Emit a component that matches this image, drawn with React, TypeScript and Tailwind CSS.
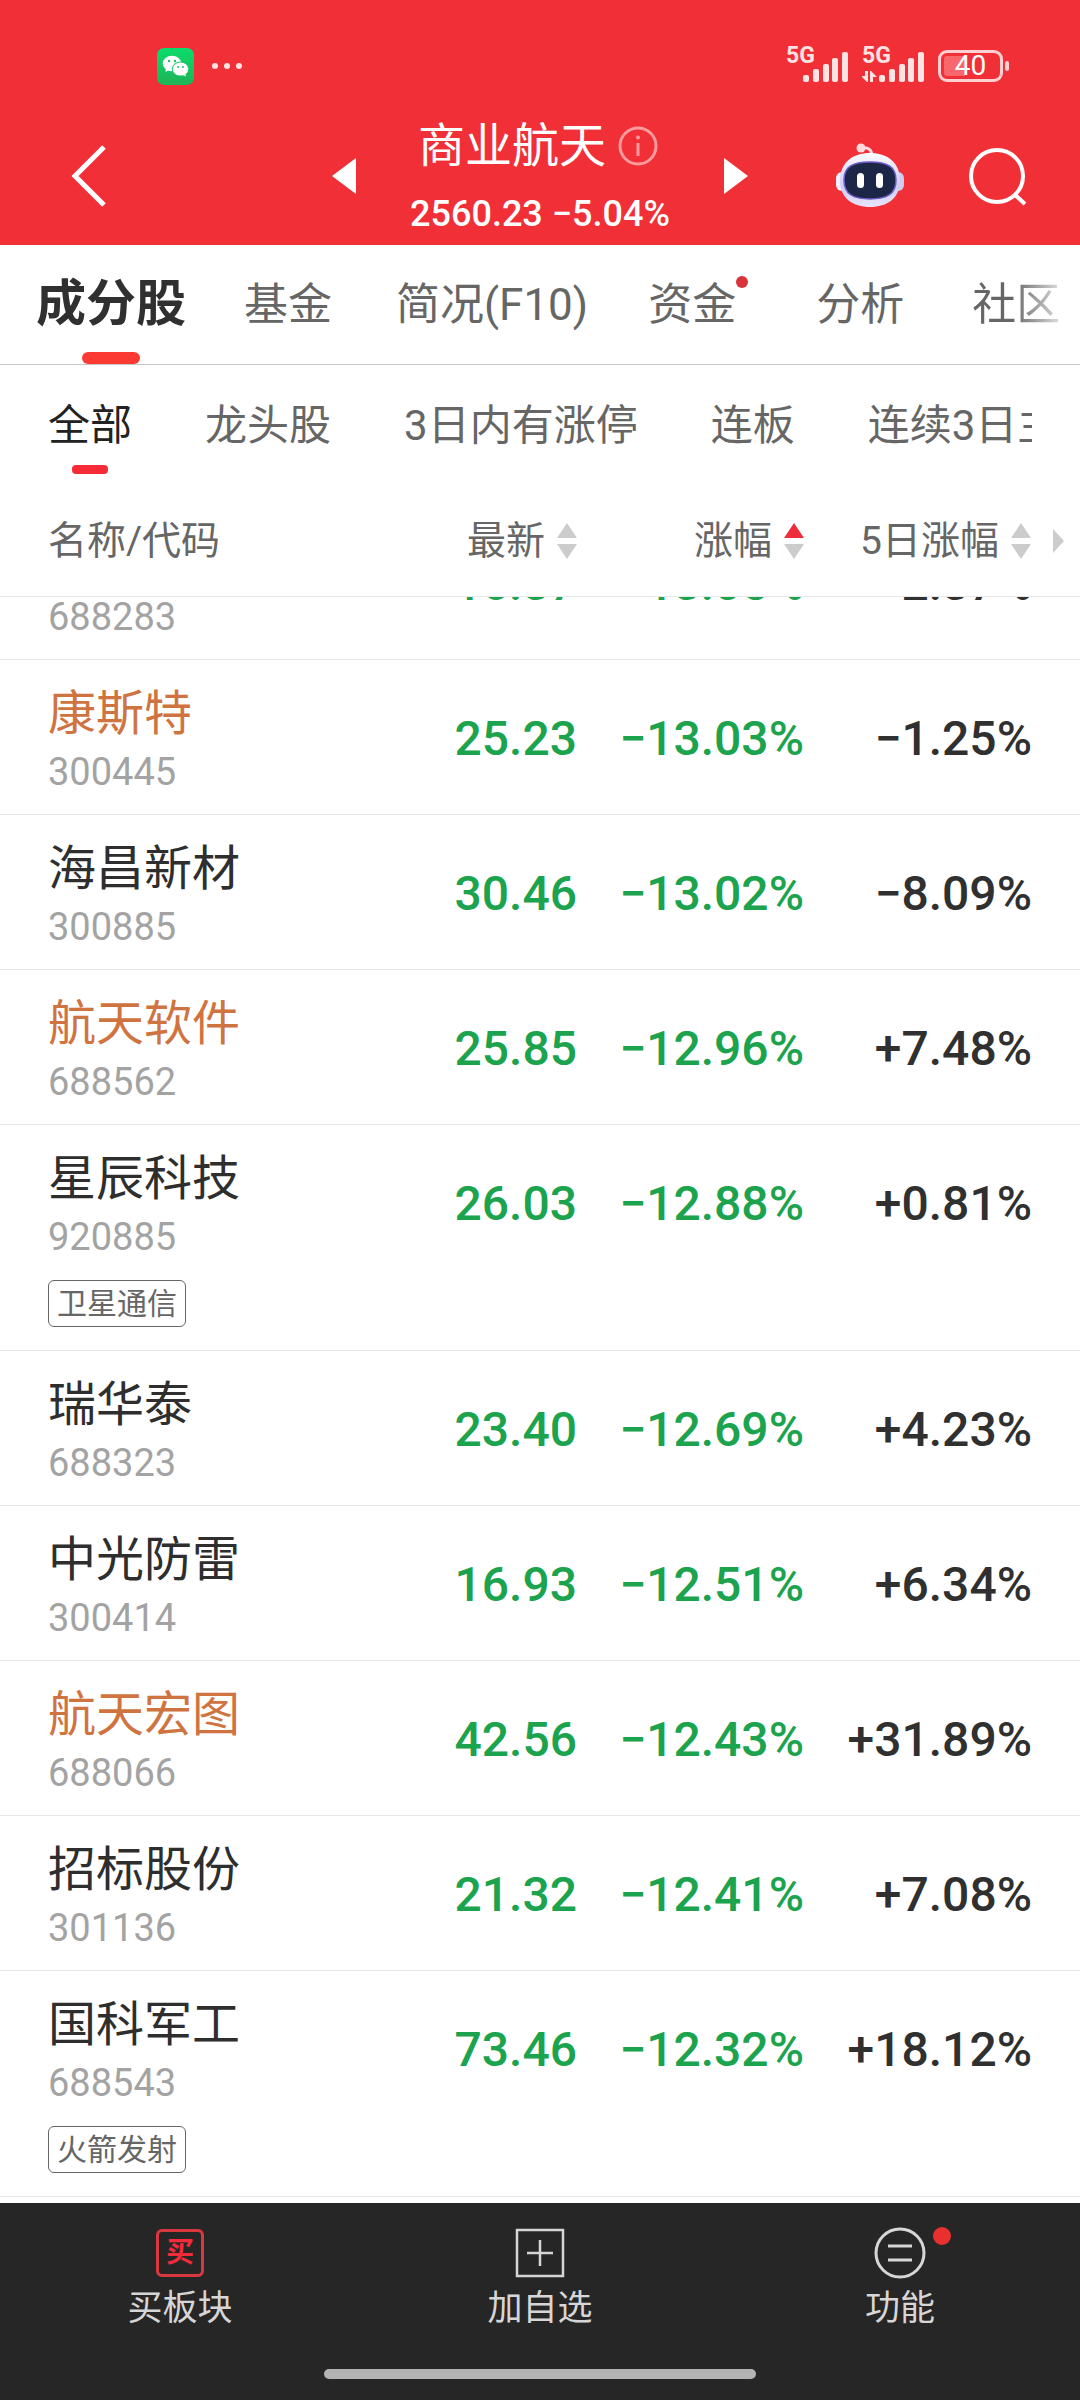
import type { ReactNode } from 'react'

type Stock = {
  name?: string
  code: string
  price: string
  change: string
  fiveDay: string
  hot?: boolean
  tag?: string
}

// first row is scrolled half way under the table head, its name is out of view
const stocks: Stock[] = [
  { code: '688283', price: '16.37', change: '−13.05%', fiveDay: '−2.37%' },
  { name: '康斯特', code: '300445', price: '25.23', change: '−13.03%', fiveDay: '−1.25%', hot: true },
  { name: '海昌新材', code: '300885', price: '30.46', change: '−13.02%', fiveDay: '−8.09%' },
  { name: '航天软件', code: '688562', price: '25.85', change: '−12.96%', fiveDay: '+7.48%', hot: true },
  { name: '星辰科技', code: '920885', price: '26.03', change: '−12.88%', fiveDay: '+0.81%', tag: '卫星通信' },
  { name: '瑞华泰', code: '688323', price: '23.40', change: '−12.69%', fiveDay: '+4.23%' },
  { name: '中光防雷', code: '300414', price: '16.93', change: '−12.51%', fiveDay: '+6.34%' },
  { name: '航天宏图', code: '688066', price: '42.56', change: '−12.43%', fiveDay: '+31.89%', hot: true },
  { name: '招标股份', code: '301136', price: '21.32', change: '−12.41%', fiveDay: '+7.08%' },
  { name: '国科军工', code: '688543', price: '73.46', change: '−12.32%', fiveDay: '+18.12%', tag: '火箭发射' },
]

const filters = ['龙头股', '3日内有涨停', '连板', '连续3日主']

function WechatIcon() {
  return (
    <svg className="w-[37px] h-[37px]" viewBox="0 0 37 37">
      <defs>
        <linearGradient id="wechat" x1="0" y1="0" x2="0" y2="1">
          <stop offset="0" stopColor="#0bdc6c" />
          <stop offset="1" stopColor="#1fb257" />
        </linearGradient>
      </defs>
      <rect width="37" height="37" rx="7" fill="url(#wechat)" />
      <path d="M9 19l-0.500 5 5-3z" fill="#fff" />
      <ellipse cx="15" cy="15.500" rx="9.300" ry="7.800" fill="#fff" />
      <ellipse cx="23.500" cy="21" rx="8.700" ry="7.500" fill="#14c660" />
      <ellipse cx="23.500" cy="21" rx="7.800" ry="6.600" fill="#fff" />
      <path d="M25 26.500l3.800 2-0.500-4z" fill="#fff" />
      <circle cx="12" cy="13" r="1.200" fill="#14c660" />
      <circle cx="18" cy="13" r="1.200" fill="#14c660" />
      <circle cx="21" cy="19" r="1" fill="#14c660" />
      <circle cx="26" cy="19" r="1" fill="#14c660" />
    </svg>
  )
}

function Signal({ active }: { active?: boolean }) {
  return (
    <div className="relative w-[63px] h-9 text-[#ffe3e3]">
      <span className="absolute left-0 -top-1 text-[23px] leading-6 font-bold">5G</span>
      <svg className="w-full h-full" viewBox="0 0 63 36" fill="currentColor">
        {active && <path d="M3 23h3v11h-1l-6-6h4zM8 34v-11h1l6 6h-4v5z" />}
        <rect x="17" y="27" width="6" height="7" rx="2" />
        <rect x="27" y="21" width="6" height="13" rx="2" />
        <rect x="37" y="16" width="6" height="18" rx="2" />
        <rect x="46" y="10" width="6" height="24" rx="2" />
        <rect x="56" y="4" width="6" height="30" rx="2" />
      </svg>
    </div>
  )
}

function RobotIcon() {
  return (
    <svg className="w-[70px] h-[66px]" viewBox="0 0 70 66">
      <defs>
        <linearGradient id="shell" x1="0" y1="0" x2="0" y2="1">
          <stop offset="0" stopColor="#fdfcff" />
          <stop offset="0.6" stopColor="#cdccf2" />
          <stop offset="1" stopColor="#e8e4fb" />
        </linearGradient>
      </defs>
      <path d="M26 5c7-1 11 1 11 9" fill="none" stroke="#ffdce6" strokeWidth="3" />
      <circle cx="26" cy="5" r="4.500" fill="#ffd9de" />
      <rect x="1" y="29" width="12" height="19" rx="6" fill="#f1effd" />
      <rect x="57" y="29" width="12" height="19" rx="6" fill="#cfc9f3" />
      <path d="M35 10c17 0 30 9 30 28 0 17-13 26-30 26S5 55 5 38c0-19 13-28 30-28z" fill="url(#shell)" />
      <path d="M35 19c18 0 26 5 26 18 0 14-9 19-26 19S9 51 9 37c0-13 8-18 26-18z" fill="#1c2748" stroke="#6a5cc9" strokeWidth="1.500" />
      <rect x="22" y="30" width="7" height="15" rx="3.500" fill="#fff" />
      <rect x="41" y="30" width="7" height="15" rx="3.500" fill="#fff" />
    </svg>
  )
}

function SortIcon({ up }: { up?: boolean }) {
  return (
    <svg className="w-5 h-9 shrink-0" viewBox="0 0 20 36">
      <path d="M10 0l10 15H0z" fill={up ? '#ee2e3a' : '#cccccc'} />
      <path d="M10 36L0 21h20z" fill="#cccccc" />
    </svg>
  )
}

function SortHeader({ label, up, children }: { label: string; up?: boolean; children?: ReactNode }) {
  return (
    <div className="flex items-center justify-end">
      <button className="flex items-center gap-3 leading-12 whitespace-nowrap">
        {label}
        <SortIcon up={up} />
      </button>
      {children}
    </div>
  )
}

function StockRow({ stock }: { stock: Stock }) {
  const cell = 'border-b border-[#e8e8e8] align-top'
  const box = stock.name ? '' : 'h-[62px] overflow-hidden flex flex-col justify-end'
  const value = 'h-[154px] shrink-0 flex items-center justify-end text-[48px] leading-none font-medium pt-1'

  return (
    <tr>
      <td className={cell + ' pl-12'}>
        {stock.name ? (
          <div className="pt-[26px] min-h-[154px]">
            <div className={'text-[48px] leading-14 whitespace-nowrap ' + (stock.hot ? 'text-[#cf7440]' : 'text-[#2e2e2e]')}>
              {stock.name}
            </div>
            <div className="mt-[10px] text-[38px] leading-10 text-[#a3a3a3]">{stock.code}</div>
            {stock.tag && (
              <div className="mt-[23px] mb-[23px] w-fit h-[47px] px-2 flex items-center rounded-md border border-[#666] text-[30px] leading-8 text-[#666]">
                {stock.tag}
              </div>
            )}
          </div>
        ) : (
          <div className="text-[38px] leading-10 text-[#a3a3a3]">{stock.code}</div>
        )}
      </td>
      <td className={cell}>
        <div className={box}>
          <div className={value + ' text-[#1ba34e]'}>{stock.price}</div>
        </div>
      </td>
      <td className={cell}>
        <div className={box}>
          <div className={value + ' text-[#1ba34e]'}>{stock.change}</div>
        </div>
      </td>
      <td className={cell + ' pr-12'}>
        <div className={box}>
          <div className={value + ' text-[#303030]'}>{stock.fiveDay}</div>
        </div>
      </td>
    </tr>
  )
}

export default function App() {
  return (
    <div className="min-h-screen flex flex-col bg-white overflow-hidden font-[Roboto,'Noto_Sans_CJK_SC',sans-serif]">
      <header className="bg-[#f12f37] text-white pb-[11px]">
        <div className="flex items-center justify-between pt-12 pl-[157px] pr-[71px] h-21">
          <div className="flex items-center gap-[18px]">
            <WechatIcon />
            <div className="flex gap-[6px]">
              <span className="size-[6px] rounded-full bg-[#ffe3e3]"></span>
              <span className="size-[6px] rounded-full bg-[#ffe3e3]"></span>
              <span className="size-[6px] rounded-full bg-[#ffe3e3]"></span>
            </div>
          </div>
          <div className="flex items-center">
            <Signal />
            <div className="w-[13px]"></div>
            <Signal active />
            <div className="ml-[13px] w-[65px] h-8 rounded-[9px] border-3 border-[#ffd0d2] p-[3px]">
              <div className="h-full w-full rounded-[3px] bg-linear-to-r from-[#f8676c] from-40% to-transparent to-40% flex items-center justify-center text-[28px] leading-5">
                40
              </div>
            </div>
            <div className="ml-[2px] w-1 h-[10px] rounded bg-[#ffd0d2]"></div>
          </div>
        </div>

        <div className="grid grid-cols-[1fr_auto_1fr] items-center pt-[34px]">
          <div className="flex items-center justify-between pl-[70px] pr-[54px]">
            <button aria-label="返回">
              <svg className="w-9 h-[62px]" viewBox="0 0 36 62" fill="none" stroke="#fff" strokeWidth="5">
                <path d="M34 2L5 31l29 29" />
              </svg>
            </button>
            <button aria-label="上一个">
              <svg className="w-6 h-9" viewBox="0 0 24 36" fill="#fff">
                <path d="M24 0v36L0 18z" />
              </svg>
            </button>
          </div>
          <div className="flex flex-col items-center">
            <div className="flex items-center gap-3 pr-1">
              <h1 className="text-[47px] leading-14">商业航天</h1>
              <button aria-label="说明">
                <svg className="size-10" viewBox="0 0 40 40" fill="none" stroke="#ff9a9d" strokeWidth="3">
                  <circle cx="20" cy="20" r="18" />
                  <path d="M20 17v13" />
                  <circle cx="20" cy="11.500" r="2" fill="#ff9a9d" stroke="none" />
                </svg>
              </button>
            </div>
            <p className="mt-5 text-[36px] leading-10 font-medium whitespace-nowrap">2560.23 −5.04%</p>
          </div>
          <div className="flex items-center justify-between pl-[54px] pr-[52px]">
            <button aria-label="下一个">
              <svg className="w-6 h-9" viewBox="0 0 24 36" fill="#fff">
                <path d="M0 0v36l24-18z" />
              </svg>
            </button>
            <div className="flex items-center gap-[63px]">
              <button aria-label="智能助手">
                <RobotIcon />
              </button>
              <button aria-label="搜索">
                <svg className="w-[60px] h-[60px]" viewBox="0 0 60 60" fill="none" stroke="#fff" strokeWidth="4">
                  <circle cx="29" cy="30" r="26" />
                  <path d="M46 48l11 10" />
                </svg>
              </button>
            </div>
          </div>
        </div>
      </header>

      <nav className="h-[120px] flex items-center border-b border-[#c6c6c6] pl-9 overflow-hidden whitespace-nowrap text-[44px] text-[#666]">
        <button className="relative h-full text-[50px] font-bold text-[#303030]">
          成分股
          <span className="absolute bottom-0 left-1/2 -translate-x-1/2 w-[58px] h-3 rounded-full bg-[#fb3a33]"></span>
        </button>
        <button className="ml-[58px]">基金</button>
        <button className="ml-16">简况(F10)</button>
        <button className="ml-15 relative">
          资金
          <span className="absolute top-1 -right-3 size-3 rounded-full bg-[#d8343a]"></span>
        </button>
        <button className="ml-20">分析</button>
        <button className="ml-17 bg-linear-to-r from-[#666] from-45% to-[#ddd] bg-clip-text text-transparent">社区</button>
      </nav>

      <nav className="h-[120px] flex items-center gap-[73px] ml-12 mr-12 shrink-0 overflow-hidden whitespace-nowrap text-[42px] text-[#666]">
        <button className="relative h-full text-[#222]">
          全部
          <span className="absolute bottom-[11px] left-1/2 -translate-x-1/2 w-9 h-[9px] rounded-[4px] bg-[#f52c38]"></span>
        </button>
        {filters.map((f) => (
          <button key={f} className="shrink-0">{f}</button>
        ))}
      </nav>

      <main className="flex-1 pb-[6px]">
        <table className="w-full table-fixed border-separate border-spacing-0">
          <thead>
            <tr className="h-28 text-[39px] leading-12 text-[#666]">
              <th className="border-b border-[#e8e8e8] pl-12 text-left font-normal">名称/代码</th>
              <th className="border-b border-[#e8e8e8] w-[227px] font-normal">
                <SortHeader label="最新" />
              </th>
              <th className="border-b border-[#e8e8e8] w-[227px] font-normal">
                <SortHeader label="涨幅" up />
              </th>
              <th className="border-b border-[#e8e8e8] w-[276px] pr-4 font-normal">
                <SortHeader label="5日涨幅">
                  <svg className="ml-[22px] w-[11px] h-6" viewBox="0 0 11 24" fill="#ccc">
                    <path d="M0 0v24l11-12z" />
                  </svg>
                </SortHeader>
              </th>
            </tr>
          </thead>
          <tbody>
            {stocks.map((s) => (
              <StockRow key={s.code} stock={s} />
            ))}
          </tbody>
        </table>
      </main>

      <footer className="bg-[#262626] text-[#d6d6d6] text-[35px] leading-10 pt-6 pb-[21px]">
        <div className="grid grid-cols-3">
          <button className="flex flex-col items-center gap-[10px]">
            <span className="h-13 flex items-center">
              <span className="size-12 flex items-center justify-center rounded-md border-3 border-[#d93840] text-[28px] leading-7 font-bold text-[#f32b3a]">
                买
              </span>
            </span>
            买板块
          </button>
          <button className="flex flex-col items-center gap-[10px]">
            <svg className="size-13" viewBox="0 0 52 52" fill="none" stroke="#d6d6d6" strokeWidth="2.500">
              <rect x="3" y="3" width="46" height="46" />
              <path d="M26 13v26M13 26h26" />
            </svg>
            加自选
          </button>
          <button className="flex flex-col items-center gap-[10px]">
            <span className="relative">
              <svg className="size-13" viewBox="0 0 52 52" fill="none" stroke="#d6d6d6" strokeWidth="3">
                <circle cx="26" cy="26" r="24" />
                <path d="M14 19h24M14 33h24" />
              </svg>
              <span className="absolute top-0 -right-[25px] size-[18px] rounded-full bg-[#ea2f2f]"></span>
            </span>
            功能
          </button>
        </div>
        <div className="mx-auto mt-10 w-[40%] h-[10px] rounded-full bg-[#b3b3b3]"></div>
      </footer>
    </div>
  )
}
